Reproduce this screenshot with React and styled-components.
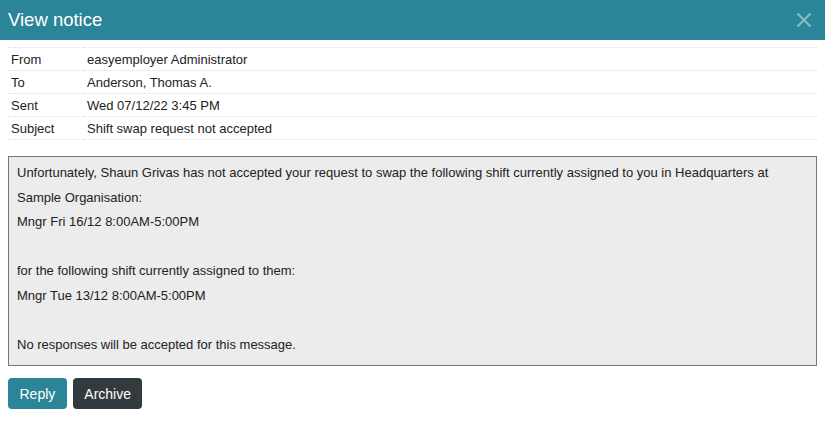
import React from "react";
import styled, { createGlobalStyle } from "styled-components";

const GlobalStyle = createGlobalStyle`
  body {
    margin: 0;
    background: #ffffff;
    font-family: "Liberation Sans", Arial, sans-serif;
    color: #222222;
  }
`;

const Dialog = styled.div`
  width: 825px;
  display: flex;
  flex-direction: column;
`;

const Header = styled.div`
  height: 40px;
  background: #2b8599;
  display: flex;
  align-items: center;
  justify-content: space-between;
  padding: 0 13px 0 8px;
  h1 {
    margin: 0;
    font-size: 18.5px;
    font-weight: 400;
    color: #ffffff;
  }
`;

const CloseButton = styled.button`
  border: 0;
  background: none;
  padding: 0;
  width: 16px;
  height: 16px;
  cursor: pointer;
  display: flex;
`;

const Body = styled.div`
  padding: 7px 8px 0 8px;
`;

const Meta = styled.table`
  width: 100%;
  border-collapse: collapse;
  font-size: 13px;
  td {
    height: 22px;
    padding: 0 3px;
    border-top: 1px dotted #dddddd;
    border-bottom: 1px dotted #dddddd;
    vertical-align: middle;
  }
  td.label {
    width: 70px;
  }
`;

const Message = styled.div`
  margin-top: 16px;
  background: #ececec;
  border: 1px solid #777777;
  padding: 4px 8px 8px 8px;
  font-size: 13px;
  line-height: 24.5px;
`;

const Actions = styled.div`
  display: flex;
  gap: 6px;
  margin-top: 12px;
`;

const Button = styled.button`
  height: 31px;
  padding: 0 11.5px;
  border: 0;
  border-radius: 4px;
  font-family: "Liberation Sans", Arial, sans-serif;
  font-size: 14px;
  color: #ffffff;
  background: ${(props) => (props.dark ? "#323a3e" : "#2b8599")};
  cursor: pointer;
`;

const meta = [
  ["From", "easyemployer Administrator"],
  ["To", "Anderson, Thomas A."],
  ["Sent", "Wed 07/12/22 3:45 PM"],
  ["Subject", "Shift swap request not accepted"],
];

export default function App() {
  return (
    <Dialog>
      <GlobalStyle />
      <Header>
        <h1>View notice</h1>
        <CloseButton aria-label="Close">
          <svg width="16" height="16" viewBox="0 0 16 16">
            <path
              d="M1.5 1.5L14.5 14.5M14.5 1.5L1.5 14.5"
              stroke="rgba(255,255,255,0.45)"
              strokeWidth="2"
            />
          </svg>
        </CloseButton>
      </Header>
      <Body>
        <Meta>
          <tbody>
            {meta.map(([label, value]) => (
              <tr key={label}>
                <td className="label">{label}</td>
                <td>{value}</td>
              </tr>
            ))}
          </tbody>
        </Meta>
        <Message>
          Unfortunately, Shaun Grivas has not accepted your request to swap the
          following shift currently assigned to you in Headquarters at Sample
          Organisation:
          <br />
          Mngr Fri 16/12 8:00AM-5:00PM
          <br />
          <br />
          for the following shift currently assigned to them:
          <br />
          Mngr Tue 13/12 8:00AM-5:00PM
          <br />
          <br />
          No responses will be accepted for this message.
        </Message>
        <Actions>
          <Button>Reply</Button>
          <Button dark>Archive</Button>
        </Actions>
      </Body>
    </Dialog>
  );
}
